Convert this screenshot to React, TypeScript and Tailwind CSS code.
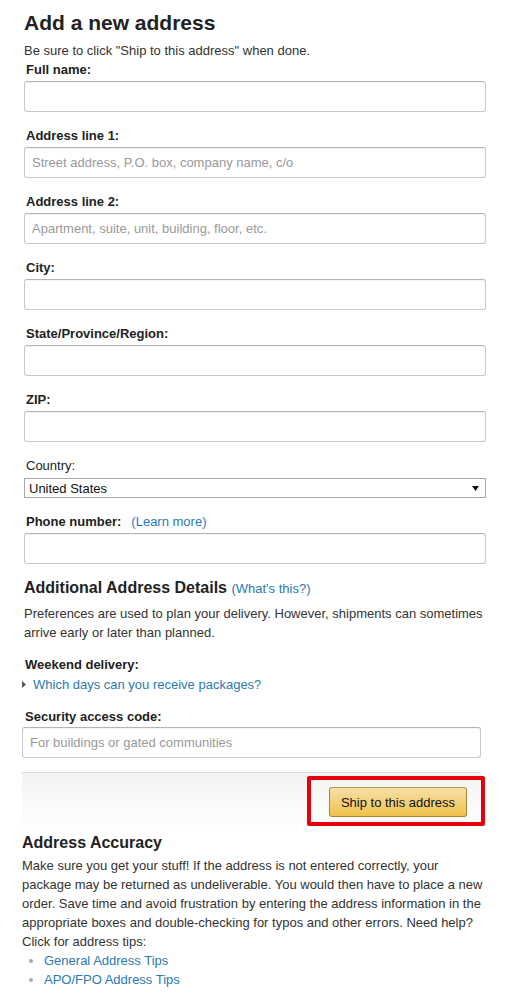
import React from "react";

const fields = [
  { label: "Full name:", placeholder: "" },
  { label: "Address line 1:", placeholder: "Street address, P.O. box, company name, c/o" },
  { label: "Address line 2:", placeholder: "Apartment, suite, unit, building, floor, etc." },
  { label: "City:", placeholder: "" },
  { label: "State/Province/Region:", placeholder: "" },
  { label: "ZIP:", placeholder: "" },
];

const inputCls =
  "block w-full h-[31px] px-[7px] border border-[#c8c8c8] border-t-[#b4b4b4] rounded-[3px] bg-white text-[13px] text-[#111] shadow-[inset_0_1px_0_rgba(0,0,0,0.04)] placeholder:text-[#999] outline-none";

function Field({ label, placeholder }: { label: string; placeholder: string }) {
  return (
    <div className="mb-[14px]">
      <label className="block pl-[2px] font-bold text-[#222]">{label}</label>
      <input className={`mt-[2px] ${inputCls}`} placeholder={placeholder} />
    </div>
  );
}

export default function App() {
  return (
    <div className="w-[511px] min-h-[1003px] bg-white text-[13px] leading-[19px] text-[#333] font-['Liberation_Sans',Arial,sans-serif]">
      <div className="pl-[24px] pr-[25px] pt-[11px]">
        <h1 className="text-[21px] leading-[24px] font-bold text-[#222]">Add a new address</h1>
        <p className="mt-[6px]">Be sure to click "Ship to this address" when done.</p>

        {fields.map((f) => (
          <Field key={f.label} label={f.label} placeholder={f.placeholder} />
        ))}

        <div className="mb-[14px]">
          <label className="block pl-[2px] text-[#222]">Country:</label>
          <div className="mt-[3px] flex h-[20px] items-center justify-between border border-[#a9a9a9] pl-[4px] pr-[6px] text-[13px] text-[#111]">
            <span>United States</span>
            <svg width="7" height="5" viewBox="0 0 7 5" className="mt-[1px]">
              <path d="M0 0h7L3.5 5z" fill="#111" />
            </svg>
          </div>
        </div>

        <div>
          <label className="block pl-[2px] text-[#222]">
            <span className="font-bold">Phone number:</span>
            <span className="ml-[10px] text-[#2a7ab5]">(Learn more)</span>
          </label>
          <input className={`mt-[2px] ${inputCls}`} />
        </div>

        <h4 className="mt-[12px] text-[16px] leading-[24px] font-bold text-[#222]">
          Additional Address Details{" "}
          <span className="text-[13px] font-normal text-[#2a7ab5]">(What's this?)</span>
        </h4>
        <p className="mt-[3px]">
          Preferences are used to plan your delivery. However, shipments can sometimes arrive early or later than planned.
        </p>

        <div className="mt-[13px] pl-[1px] font-bold text-[#222]">Weekend delivery:</div>
        <div className="mt-[1px] -ml-[2px] flex items-center gap-[7px]">
          <svg width="4" height="7" viewBox="0 0 4 7">
            <path d="M0 0l4 3.5L0 7z" fill="#555" />
          </svg>
          <span className="text-[#2a7ab5]">Which days can you receive packages?</span>
        </div>

        <div className="mt-[13px] pl-[1px] font-bold text-[#222]">Security access code:</div>
        <input
          className={`mt-[1px] -ml-[2px] !w-[459px] ${inputCls}`}
          placeholder="For buildings or gated communities"
        />

        <div className="mt-[14px] -ml-[2px] w-[459px] border-t border-[#dcdcdc] bg-gradient-to-b from-[#f3f3f3] to-white pt-[14px] pb-[14px] pr-[14px] flex justify-end">
          <div className="relative">
            <button className="h-[30px] w-[138px] rounded-[3px] border border-[#a88734] border-t-[#b79a49] bg-gradient-to-b from-[#f7dfa5] to-[#f0c14b] text-[13px] text-[#111]">
              Ship to this address
            </button>
            <div className="pointer-events-none absolute -left-[22px] -right-[18px] -top-[11px] -bottom-[9px] rounded-[2px] border-[4px] border-[#e5000d]" />
          </div>
        </div>

        <div className="-ml-[2px] w-[462px]">
          <h4 className="mt-[1px] text-[16px] leading-[22px] font-bold text-[#222]">Address Accuracy</h4>
          <p className="mt-[2px]">
            Make sure you get your stuff! If the address is not entered correctly, your package may be returned as
            undeliverable. You would then have to place a new order. Save time and avoid frustration by entering the
            address information in the appropriate boxes and double-checking for typos and other errors. Need help?
            Click for address tips:
          </p>
          <ul className="list-disc pl-[22px] marker:text-[#aaa]">
            <li className="text-[#2a7ab5]">General Address Tips</li>
            <li className="text-[#2a7ab5]">APO/FPO Address Tips</li>
          </ul>
        </div>
      </div>
    </div>
  );
}
